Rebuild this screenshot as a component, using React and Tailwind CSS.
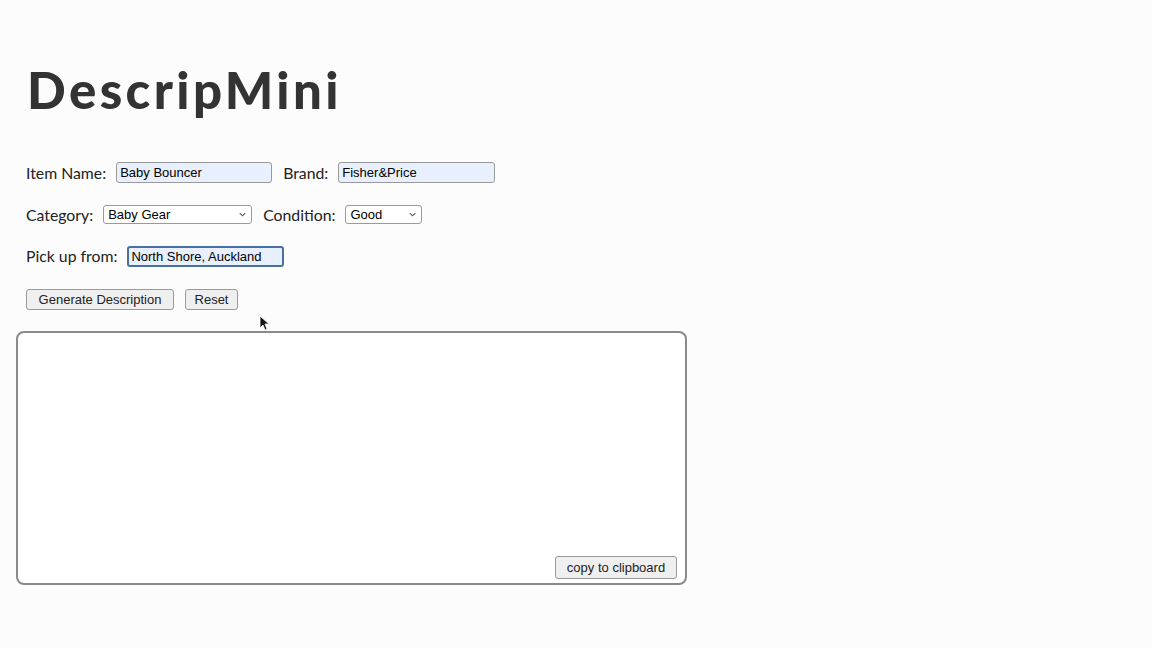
import React, { useState } from "react";

export default function App() {
  const [item, setItem] = useState("Baby Bouncer");
  const [brand, setBrand] = useState("Fisher&Price");
  const [pickup, setPickup] = useState("North Shore, Auckland");
  const [desc, setDesc] = useState("");

  const label = "text-[15.8px] text-[#222] mr-[10px]";
  const input =
    "h-[21px] border border-[#9a9a9a] rounded-[3px] bg-[#e8f0fe] px-[3px] text-[13px] text-black outline-none";
  const select =
    "h-[19px] border border-[#9a9a9a] rounded-[3px] bg-white pl-[4px] text-[13px] text-black appearance-none flex items-center justify-between";
  const btn =
    "h-[21px] px-[7px] border border-[#9a9a9a] rounded-[3px] bg-[#efefef] text-[13px] text-[#222]";

  return (
    <div
      className="min-h-screen w-full bg-[#fcfcfc] px-[16px] pt-[64px]"
      style={{ fontFamily: "Lato, 'Open Sans', sans-serif" }}
    >
      <h1 className="pl-[11px] text-[51px] font-black leading-none text-[#333] tracking-[3.4px]">
        DescripMini
      </h1>

      <div className="pl-[10px] mt-[46px] flex items-center">
        <span className={label}>Item Name:</span>
        <input
          className={`${input} w-[156px]`}
          style={{ fontFamily: "'Liberation Sans', Arial, sans-serif" }}
          value={item}
          onChange={(e) => setItem(e.target.value)}
        />
        <span className={`${label} ml-[11px]`}>Brand:</span>
        <input
          className={`${input} w-[157px]`}
          style={{ fontFamily: "'Liberation Sans', Arial, sans-serif" }}
          value={brand}
          onChange={(e) => setBrand(e.target.value)}
        />
      </div>

      <div className="pl-[10px] mt-[18px] flex items-center">
        <span className={label}>Category:</span>
        <div
          className={`${select} w-[149px]`}
          style={{ fontFamily: "'Liberation Sans', Arial, sans-serif" }}
        >
          <span>Baby Gear</span>
          <svg className="w-[9px] h-[9px] mr-[4px]" viewBox="0 0 10 10" fill="none" stroke="#555" strokeWidth="1.2">
            <path d="M2 3.5l3 3 3-3" />
          </svg>
        </div>
        <span className={`${label} ml-[11px]`}>Condition:</span>
        <div
          className={`${select} w-[77px]`}
          style={{ fontFamily: "'Liberation Sans', Arial, sans-serif" }}
        >
          <span>Good</span>
          <svg className="w-[9px] h-[9px] mr-[4px]" viewBox="0 0 10 10" fill="none" stroke="#555" strokeWidth="1.2">
            <path d="M2 3.5l3 3 3-3" />
          </svg>
        </div>
      </div>

      <div className="pl-[10px] mt-[18px] flex items-center">
        <span className={label}>Pick up from:</span>
        <input
          className="h-[21px] w-[157px] border-2 border-[#4a6fa5] rounded-[3px] bg-[#e8f0fe] px-[2px] text-[13px] text-black outline-none"
          style={{ fontFamily: "'Liberation Sans', Arial, sans-serif" }}
          value={pickup}
          onChange={(e) => setPickup(e.target.value)}
        />
      </div>

      <div
        className="pl-[10px] mt-[21px] flex items-center gap-[11px] relative"
        style={{ fontFamily: "'Liberation Sans', Arial, sans-serif" }}
      >
        <button className={`${btn} w-[148px]`}>Generate Description</button>
        <button className={`${btn} w-[53px]`} onClick={() => setDesc("")}>
          Reset
        </button>
        <svg
          className="absolute left-[243px] top-[26px] w-[10px] h-[16px]"
          viewBox="0 0 10 16"
        >
          <path d="M1 1v12l3-3 2 5 2-1-2-5h4z" fill="#111" stroke="#fff" strokeWidth="0.8" />
        </svg>
      </div>

      <div className="relative mt-[21px] w-[671px] h-[254px]">
        <textarea
          className="w-full h-full border-2 border-[#8a8a8a] rounded-[8px] bg-white resize-none outline-none p-2 text-[13px]"
          value={desc}
          onChange={(e) => setDesc(e.target.value)}
        />
        <button
          className={`${btn} absolute right-[10px] bottom-[6px] h-[23px] w-[122px]`}
          style={{ fontFamily: "'Liberation Sans', Arial, sans-serif" }}
        >
          copy to clipboard
        </button>
      </div>
    </div>
  );
}
